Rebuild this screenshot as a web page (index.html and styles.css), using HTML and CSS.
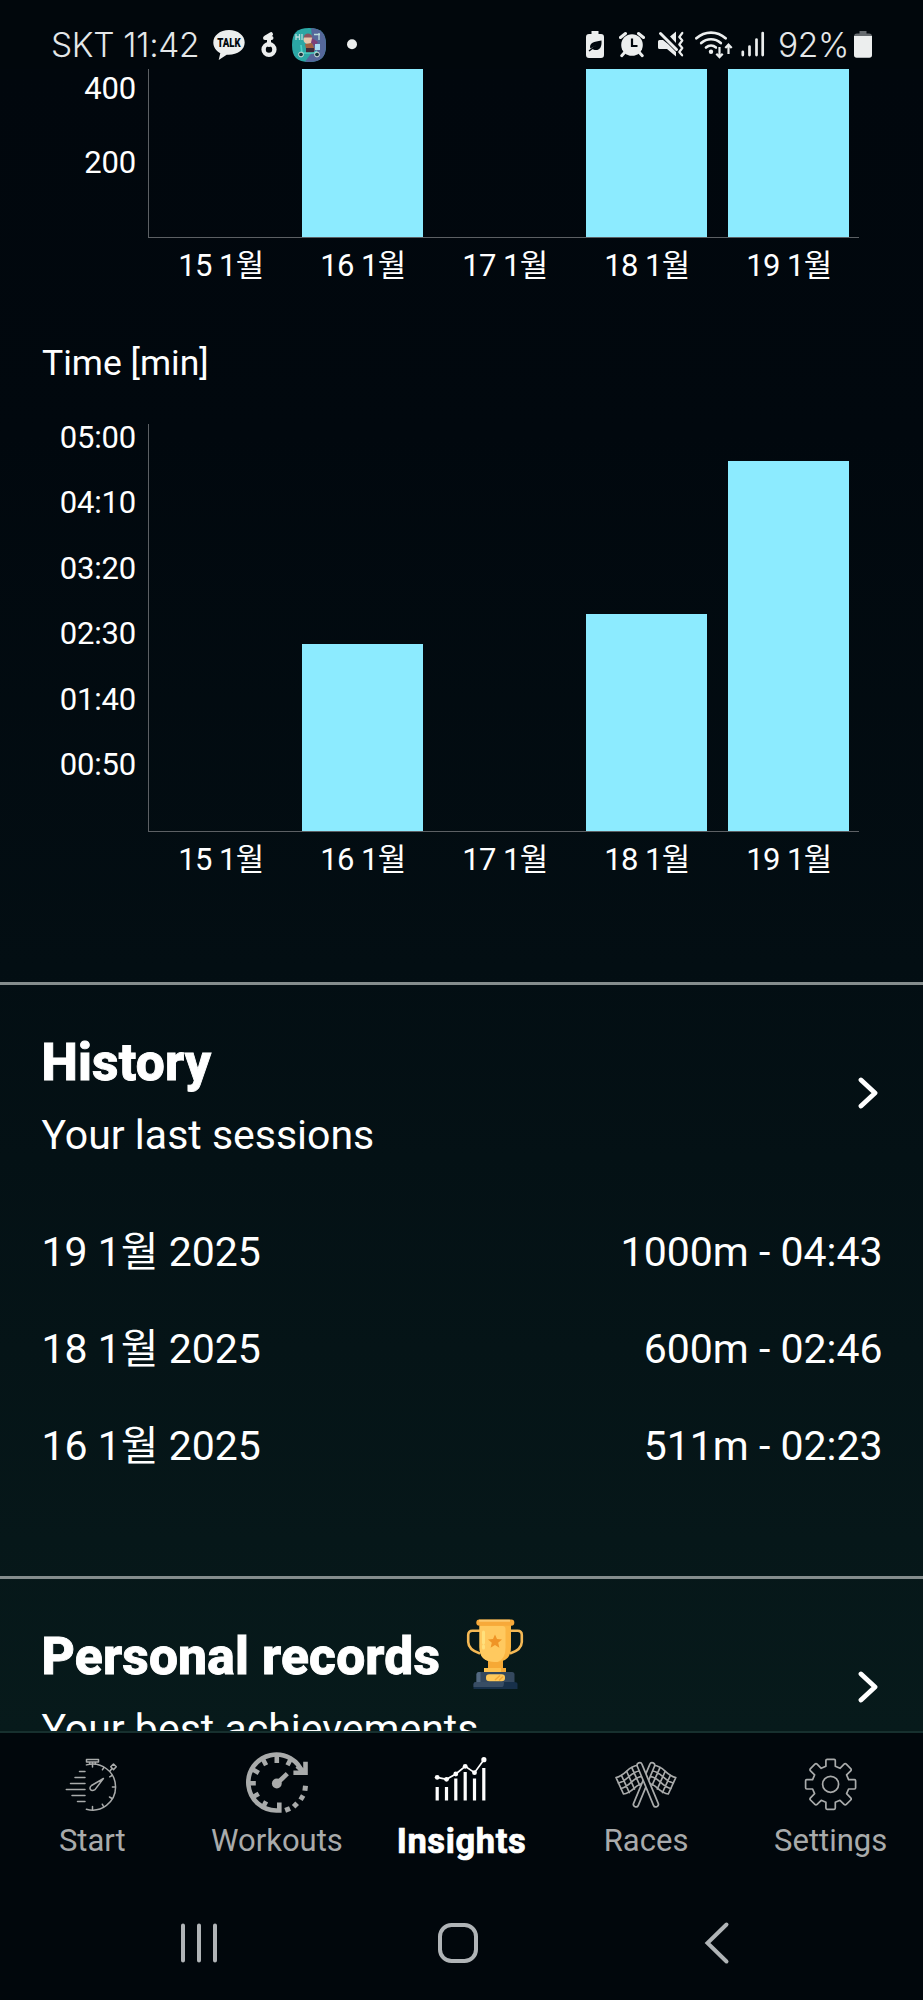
FILE: index.html
```html
<!DOCTYPE html>
<html lang="en">
<head>
<meta charset="utf-8">
<title>Insights</title>
<link rel="stylesheet" href="styles.css">
</head>
<body>
<div class="phone">
  <header class="status">
    <div class="status-group status-left">
      <span class="clock">SKT 11:42</span>
      <svg class="i-talk" width="32" height="36" viewBox="0 0 32 36"><path fill="#eceeee" d="M16 3C7 3 .3 8.500.3 15.500c0 4.600 2.800 8.500 7 10.700L5.700 33l8-5.300c10 .8 18-4.700 18-12.200C31.700 8.500 25 3 16 3z"/><text x="4.200" y="19.800" textLength="23.500" lengthAdjust="spacingAndGlyphs" class="talk">TALK</text></svg>
      <svg class="i-six" width="16" height="36" viewBox="0 0 16 36"><circle cx="8" cy="22.500" r="5.400" fill="none" stroke="#eceeee" stroke-width="4.400"/><path d="M4.500 10.500l5.500-3.300M4 11h6.500M8 12v6" fill="none" stroke="#eceeee" stroke-width="4" stroke-linecap="round"/></svg>
      <svg class="i-avatar" width="34" height="36" viewBox="0 0 34 36">
        <defs><clipPath id="av"><path d="M17 1C29 1 34 6 34 18S29 35 17 35 0 30 0 18 5 1 17 1z"/></clipPath></defs>
        <g clip-path="url(#av)"><rect width="34" height="36" fill="#2ba7a5"/><path d="M19 0h15v36H12l9-12z" fill="#55679a"/><path d="M4 7v6M7.500 7v6M4 10h3.500M10 7v6M22 7.500h6M27 6v7" stroke="#b9dcdc" stroke-width="1.300"/><circle cx="16" cy="12.500" r="4.500" fill="#e6c7ad"/><path d="M11.500 10.500c1-5.500 8-5.500 9 0z" fill="#8a5560"/><path d="M20 11l6 4-3 4-4-3z" fill="#7d3f78"/><path d="M13 17l7-1 3 7-8 3z" fill="#a4603f"/><path d="M14 21h8v5h-8z" fill="#3d2a3a"/><rect x="23" y="17" width="5" height="6" fill="#a9dcf5"/><path d="M9 18l1 8h12l3-2" fill="none" stroke="#4ed0c4" stroke-width="1.700"/><circle cx="9" cy="27.500" r="2.400" fill="#173940" stroke="#d6e6e2"/><circle cx="25" cy="27.500" r="2.400" fill="#173940" stroke="#d6e6e2"/></g>
      </svg>
      <svg class="i-dot" width="12" height="36" viewBox="0 0 12 36"><circle cx="6" cy="17.300" r="5" fill="#eceeee"/></svg>
    </div>
    <div class="status-group status-right">
      <svg class="i-saver" width="18" height="36" viewBox="0 0 18 36"><path fill="#eceeee" d="M5.500 4h7v3H15a3 3 0 0 1 3 3v18a3 3 0 0 1-3 3H3a3 3 0 0 1-3-3V10a3 3 0 0 1 3-3h2.500z"/><path fill="#01080e" d="M15.500 13.500c.5 7-2 9.500-5.500 9.500-2 0-3.500-.8-4.500-1.600l4.800-3-6 3.200C3 16 8 14.500 15.500 13.500z"/><path d="M3 24l6-4.500" stroke="#01080e" stroke-width="1.500"/></svg>
      <svg class="i-alarm" width="26" height="36" viewBox="0 0 26 36"><circle cx="13" cy="18" r="10.800" fill="#eceeee"/><path d="M1.500 10.500l5-4M24.500 10.500l-5-4" stroke="#eceeee" stroke-width="3" stroke-linecap="round"/><path d="M6.500 24.500l-3.800 4.200M19.500 24.500l3.800 4.200" stroke="#eceeee" stroke-width="3" stroke-linecap="round"/><path d="M13 11.500v7.500h5.500" fill="none" stroke="#01080e" stroke-width="2.200"/></svg>
      <svg class="i-mute" width="26" height="36" viewBox="0 0 26 36"><path fill="#eceeee" d="M1.500 13H5L10 17l8 8v4.500L9 22H1.500A1.500 1.500 0 0 1 0 20.500v-6A1.500 1.500 0 0 1 1.500 13zM18 4.500V16l-6-6.500z"/><path d="M2.500 6.500l16 16" stroke="#eceeee" stroke-width="3" stroke-linecap="round"/><path d="M24.300 6l-3 4 3 3.500-3 4 3 3.500-3 4 2.800 3.300" fill="none" stroke="#eceeee" stroke-width="2.200" stroke-linecap="round" stroke-linejoin="round"/></svg>
      <svg class="i-wifi" width="38" height="36" viewBox="0 0 38 36"><g fill="none" stroke="#eceeee" stroke-width="2.700" stroke-linecap="round"><path d="M1.400 11.300c8.500-7.700 20.700-7.700 29.200 0"/><path d="M6.200 16c5.800-5 13.800-5 19.600 0"/><path d="M11 20.500c3-2.500 7-2.500 10 0"/></g><circle cx="16" cy="24.700" r="2.200" fill="#eceeee"/><path d="M24.500 20v10M21.300 26.800l3.200 3.400 3.200-3.400M33.500 27v-9M30.300 21l3.200-3.400 3.200 3.400" fill="none" stroke="#01080e" stroke-width="4.500"/><path d="M24.500 20v10M21.300 26.800l3.200 3.400 3.200-3.400M33.500 27v-9M30.300 21l3.200-3.400 3.200 3.400" fill="none" stroke="#eceeee" stroke-width="2.200"/></svg>
      <svg class="i-signal" width="24" height="36" viewBox="0 0 24 36"><path d="M1.800 24.800v3.300M8.500 19.500v8.600M15.500 12.500v15.600M21.700 6v22.100" stroke="#eceeee" stroke-width="2.700" stroke-linecap="round"/></svg>
      <span class="percent">92%</span>
      <svg class="i-batt" width="18" height="36" viewBox="0 0 18 36"><path fill="#666b6f" d="M5.500 4h7v2.500H15a3 3 0 0 1 3 3H0a3 3 0 0 1 3-3h2.500z"/><path fill="#eceeee" d="M0 9h18v19a2.700 2.700 0 0 1-2.700 2.700H2.700A2.700 2.700 0 0 1 0 28z"/></svg>
    </div>
  </header>

  <main class="content">
    <div class="chart chart-distance">
      <div class="y-labels"><span>400</span><span>200</span></div>
      <div class="plot">
        <div class="slot"></div>
        <div class="slot"><div class="bar bar-full"></div></div>
        <div class="slot"></div>
        <div class="slot"><div class="bar bar-full"></div></div>
        <div class="slot"><div class="bar bar-full"></div></div>
      </div>
      <div class="x-labels"><span>15 1월</span><span>16 1월</span><span>17 1월</span><span>18 1월</span><span>19 1월</span></div>
    </div>

    <h3 class="chart-title">Time [min]</h3>
    <div class="chart chart-time">
      <div class="y-labels"><span>05:00</span><span>04:10</span><span>03:20</span><span>02:30</span><span>01:40</span><span>00:50</span></div>
      <div class="plot">
        <div class="slot"></div>
        <div class="slot"><div class="bar" style="height:187px"></div></div>
        <div class="slot"></div>
        <div class="slot"><div class="bar" style="height:217px"></div></div>
        <div class="slot"><div class="bar" style="height:370px"></div></div>
      </div>
      <div class="x-labels"><span>15 1월</span><span>16 1월</span><span>17 1월</span><span>18 1월</span><span>19 1월</span></div>
    </div>

    <section class="section">
      <div class="section-head">
        <div>
          <h2 class="title">History</h2>
          <p class="subtitle">Your last sessions</p>
        </div>
        <svg class="chevron" width="20" height="32" viewBox="0 0 20 32"><path d="M3 3l14 13L3 29" /></svg>
      </div>
      <div class="rows">
        <div class="row"><span>19 1월 2025</span><span>1000m - 04:43</span></div>
        <div class="row"><span>18 1월 2025</span><span>600m - 02:46</span></div>
        <div class="row"><span>16 1월 2025</span><span>511m - 02:23</span></div>
      </div>
    </section>

    <section class="section">
      <div class="section-head">
        <div>
          <h2 class="title">Personal records
            <svg class="trophy" width="58" height="70" viewBox="0 0 58 70">
              <path d="M14 11.800H6.500Q2.200 11.800 2.200 16v7Q2.500 31 14 34.500M44 11.800h7.500q4.300 0 4.300 4.200v7Q55.500 31 44 34.500" fill="none" stroke="#f5b955" stroke-width="2.600"/>
              <path d="M22 41h15v8h3v5H18v-5h4z" fill="#f6a935"/><path d="M18 49h17v4H18z" fill="#fdc14e"/>
              <path d="M13.500 6h31.500v22c0 10-5 15-15.700 15S13.500 38 13.500 28z" fill="#fbb542"/>
              <path d="M13.500 7h23q3 0 3 3v19q0 11-8 14h-3C18 42 13.500 38 13.500 28z" fill="#ffc95f"/>
              <path d="M17.500 13v11M17.500 27v2" stroke="#ffe07c" stroke-width="3" stroke-linecap="round"/>
              <rect x="10.300" y=".5" width="38" height="6.200" rx="3" fill="#f7a93a"/><path d="M13 1.700h31" stroke="#fdc96d" stroke-width="2"/>
              <path d="M29 15.500l2 4.600 5 .4-3.800 3.300 1.200 4.900-4.400-2.600-4.400 2.600 1.200-4.900-3.800-3.300 5-.4z" fill="#ef9426"/>
              <path d="M13 53h33q2.500 0 2.500 2.500V65h-38V55.500Q10.500 53 13 53z" fill="#34485e"/><path d="M10.500 55.500Q10.500 53 13 53h1.500v11h-4z" fill="#526880"/>
              <path d="M10 63h38q3.500 0 3.500 2v5h-44v-5q0-2 2.500-2z" fill="#17304a"/><path d="M10 63h28q0 5-2 5H7.500v-3q0-2 2.500-2z" fill="#384d64"/>
              <rect x="20" y="55.300" width="19" height="7" rx="3.300" fill="#ffc95a"/><path d="M29 61l5-4.500M33 61.500l4-4" stroke="#f3a637" stroke-width="1.500"/>
            </svg>
          </h2>
          <p class="subtitle">Your best achievements</p>
        </div>
        <svg class="chevron" width="20" height="32" viewBox="0 0 20 32"><path d="M3 3l14 13L3 29" /></svg>
      </div>
    </section>
  </main>

  <nav class="tabs">
    <div class="tab">
      <svg class="tab-icon" viewBox="0 0 70 66" fill="none" stroke="#a9abab" stroke-width="1.500" stroke-linecap="round" stroke-linejoin="round">
        <path d="M29.400 14.900A23 23 0 1 1 29.400 59.200"/>
        <path d="M22.500 21.500H28M18 27.500H28M13.500 33.500H28M9.300 39.500H28M15 45.500H28M20.500 51.500H28"/>
        <path d="M29.500 9.500h12v2.600h-12zM32.700 12.100v2M38.300 12.100v2M35.500 12.100v5M53 21l2-2.500M56.500 14l2.800 2.800-2.800 2.800-2.800-2.800z"/>
        <path d="M46.400 28.500L38 39.600Q35 41.500 33.400 39.500 32.200 37.200 34.500 35.500z"/>
        <path d="M35.500 59.500v-3M46.500 56.500l-1.200-2.300M55 48.500l-2.500-1.500M58.200 37h-2.800M55 25.500l-2.300 1.300M46.700 17.600l-1.300 2.200"/>
      </svg>
      <span>Start</span>
    </div>
    <div class="tab">
      <svg class="tab-icon" viewBox="0 0 70 66" fill="none" stroke="#a9abab" stroke-width="4.600">
        <path d="M61 24A28 28 0 1 0 34.800 60.500h2.500v-8"/>
        <path d="M34.800 6v7M20.800 9l3.300 6.300M10.500 19.300l6.300 3.600M6.800 33.300h7M10.500 47.300l6.300-3.600M20.800 57.600l3.300-6.200M48.800 9l-3.300 6.300"/>
        <path d="M63.500 11.700v11H51.400M55 16l8 7" /><path d="M45.300 23.700L36 32.500"/><circle cx="34.800" cy="33.500" r="4.900" fill="#a9abab" stroke="none"/>
        <g fill="#a9abab" stroke="none"><path d="M61 35.500l5 .5-.6 5-5-.6zM59 44.200l4.300 2.600-2.600 4.200-4.200-2.500zM53.300 51.500l3.700 3.500-3.600 3.600-3.500-3.700zM47 56.300l2 4.500-5 2-1.700-4.700z"/></g>
      </svg>
      <span>Workouts</span>
    </div>
    <div class="tab tab-active">
      <svg class="tab-icon" viewBox="0 0 70 66" fill="none" stroke="#fff">
        <path stroke-width="3.200" d="M11.200 50.500V37M20.500 50.500V37M29.800 50.500V28.600M39.200 50.500V22M48.500 50.500V28.600M57.800 50.500V18"/>
        <path stroke-width="1.700" d="M11.200 27.300L20.500 29.300 29.800 24 39.200 16.300 48.500 22.700 57.900 9.700"/>
        <g fill="#fff" stroke="none"><circle cx="11.200" cy="27.300" r="2.400"/><circle cx="20.500" cy="29.300" r="2.400"/><circle cx="29.800" cy="24" r="2.400"/><circle cx="39.200" cy="16.300" r="2.400"/><circle cx="48.500" cy="22.700" r="2.400"/><circle cx="57.900" cy="9.700" r="2.600"/></g>
      </svg>
      <span>Insights</span>
    </div>
    <div class="tab">
      <svg class="tab-icon" viewBox="0 0 70 66" fill="none" stroke="#a9abab" stroke-width="1.700" stroke-linecap="round" stroke-linejoin="round">
        <defs><g id="flag">
          <path d="M27 15.500C17 15.500 15 25.500 5 27.500L12.500 44C22 43 24 34 33 33"/>
          <path d="M20.800 17.600L28.600 35M15.700 21.500L23.500 39M10.500 25.500L18.300 42.500M29 21C19.500 21 17 31 7.500 33M31 26.500C21.500 27 19.500 36.500 10 38.500"/>
        </g></defs>
        <use href="#flag"/><use href="#flag" transform="translate(69.800 0) scale(-1 1)"/>
        <path fill="#01070c" d="M38.800 14.300a2.500 2.500 0 0 1 4.700 1.900L27.300 55.300a2.500 2.500 0 0 1-4.700-1.900z"/>
        <path fill="#01070c" d="M31 14.300a2.500 2.500 0 0 0-4.700 1.900l16.200 39.100a2.500 2.500 0 0 0 4.700-1.900z"/>
      </svg>
      <span>Races</span>
    </div>
    <div class="tab">
      <svg class="tab-icon" viewBox="0 0 70 66" fill="none" stroke="#a9abab" stroke-width="1.700" stroke-linejoin="round">
        <g transform="translate(34.600 34.300)"><circle r="8"/><path d="M-4.700-18V-23.800Q-4.700-25-3.500-25H3.500Q4.700-25 4.700-23.800V-18L9.400-16 13.500-20.100Q14.600-21.200 15.700-20.100L20.100-15.700Q21.200-14.600 20.100-13.500L16-9.400 18-4.700H23.800Q25-4.700 25-3.500V3.500Q25 4.700 23.800 4.700H18L16 9.400 20.100 13.500Q21.200 14.600 20.100 15.700L15.700 20.100Q14.600 21.200 13.500 20.100L9.400 16 4.700 18V23.800Q4.700 25 3.500 25H-3.500Q-4.700 25-4.700 23.800V18L-9.400 16-13.500 20.100Q-14.600 21.200-15.700 20.100L-20.100 15.700Q-21.200 14.600-20.100 13.500L-16 9.400-18 4.700H-23.800Q-25 4.700-25 3.500V-3.500Q-25-4.700-23.800-4.700H-18L-16-9.400-20.100-13.500Q-21.200-14.600-20.100-15.700L-15.700-20.100Q-14.600-21.200-13.500-20.100L-9.400-16z"/></g>
      </svg>
      <span>Settings</span>
    </div>
  </nav>

  <footer class="system-nav">
    <svg width="38" height="44" viewBox="0 0 38 44"><path d="M3 4.500v35M19 4.500v35M35 4.500v35"/></svg>
    <svg class="home" width="44" height="44" viewBox="0 0 44 44"><rect x="4" y="4" width="36" height="36" rx="11.500"/></svg>
    <svg width="26" height="44" viewBox="0 0 26 44"><path d="M22.500 3.500L3.500 22l19 18.500"/></svg>
  </footer>
</div>
</body>
</html>
```

FILE: styles.css
```css
* { box-sizing: border-box; }
body { margin: 0; background: #01070c; }
h2, h3, p { margin: 0; font-weight: 400; }
svg { display: block; flex: none; }

.phone {
  width: 923px;
  height: 2000px;
  display: flex;
  flex-direction: column;
  overflow: hidden;
  color: #fff;
  background: #01070c;
  font-family: Roboto, "Noto Sans CJK KR", sans-serif;
}

/* status bar */
.status {
  height: 69px;
  flex: none;
  display: flex;
  justify-content: space-between;
  padding: 27px 51px 0 51px;
  color: #e4e7e9;
}
.status-group { display: flex; height: 36px; }
.clock, .percent {
  font-family: Inter, sans-serif;
  font-weight: 350;
  font-size: 33.5px;
  line-height: 36px;
  white-space: nowrap;
}
.clock { width: 162px; letter-spacing: -0.3px; }
.percent { width: 76px; margin-left: 13px; letter-spacing: -0.3px; }
.talk { font: 900 12px Roboto, sans-serif; fill: #01080e; }
.i-six { margin-left: 16px; }
.i-avatar { margin-left: 15px; }
.i-dot { margin-left: 20px; }
.i-alarm { margin-left: 15px; }
.i-mute { margin-left: 13px; }
.i-wifi { margin-left: 11px; }
.i-signal { margin-left: 8px; }

/* scrolling content */
.content {
  height: 1662px;
  flex: none;
  overflow: hidden;
  background: linear-gradient(#01070d 0%, #01080e 22%, #030e13 54%, #071a1b 100%);
}

.chart {
  display: grid;
  grid-template-columns: 148px 711px;
}
.chart-distance { grid-template-rows: 169px 54px; }
.chart-time { grid-template-rows: 408px 54px; }
.y-labels {
  display: flex;
  flex-direction: column;
  height: 0;
  padding-right: 12px;
  text-align: right;
  font-size: 31px;
  letter-spacing: -0.2px;
}
.y-labels span { flex: none; }
.chart-distance .y-labels { margin-top: -17.5px; }
.chart-distance .y-labels span { height: 74px; line-height: 74px; }
.chart-time .y-labels { margin-top: -19px; }
.chart-time .y-labels span { height: 65.4px; line-height: 65px; }
.plot {
  display: flex;
  border-left: 1px solid #5c6064;
  border-bottom: 1px solid #5c6064;
}
.slot {
  width: 142px;
  display: flex;
  justify-content: center;
  align-items: flex-end;
}
.bar { width: 121px; background: #8cebff; }
.bar-full { height: 100%; }
.x-labels {
  grid-column: 2;
  display: flex;
  padding-left: 2px;
  font-size: 31px;
  line-height: 56px;
  letter-spacing: -0.6px;
}
.x-labels span { width: 142px; flex: none; text-align: center; white-space: nowrap; }
.chart-title {
  margin: 46px 0 36px 42px;
  font-size: 35.5px;
  line-height: 50px;
}

.section {
  height: 594px;
  border-top: 3px solid #858d8d;
  padding: 48px 40.5px 0 41.5px;
}
.chart-time + .section { margin-top: 96px; }
.section-head {
  display: flex;
  justify-content: space-between;
  align-items: flex-start;
}
.title {
  display: flex;
  gap: 26px;
  font-size: 51.5px;
  font-weight: 800;
  line-height: 60px;
  letter-spacing: 0.2px;
  white-space: nowrap;
  -webkit-text-stroke: 0.9px #fff;
}
.trophy { margin: -8px 0 -2px; }
.subtitle {
  margin-top: 14.5px;
  font-size: 41px;
  line-height: 54px;
}
.chevron {
  margin: 44px 5px 0 0;
  fill: none;
  stroke: #fff;
  stroke-width: 4.8;
  stroke-linecap: round;
  stroke-linejoin: round;
}
.rows { margin-top: 42px; }
.row {
  display: flex;
  justify-content: space-between;
  height: 97.3px;
  font-size: 41px;
  line-height: 97.3px;
}

/* bottom tabs */
.tabs {
  height: 149px;
  flex: none;
  display: flex;
  padding-top: 17px;
  border-top: 2px solid #17302f;
}
.tab {
  flex: 1;
  display: flex;
  flex-direction: column;
  align-items: center;
  color: #a9abab;
  font-size: 31px;
  line-height: 50px;
}
.tab-icon { width: 70px; height: 66px; }
.tab-active {
  color: #fff;
  font-weight: 700;
  font-size: 34.5px;
  letter-spacing: 0.6px;
}
.tab-active span { -webkit-text-stroke: 0.7px #fff; }

.system-nav {
  flex: 1;
  display: flex;
  justify-content: space-between;
  padding: 41px 193px 0 180px;
}
.system-nav svg {
  fill: none;
  stroke: #b0b4b7;
  stroke-width: 4;
  stroke-linecap: round;
}
.system-nav .home { margin-right: 6px; }
```
